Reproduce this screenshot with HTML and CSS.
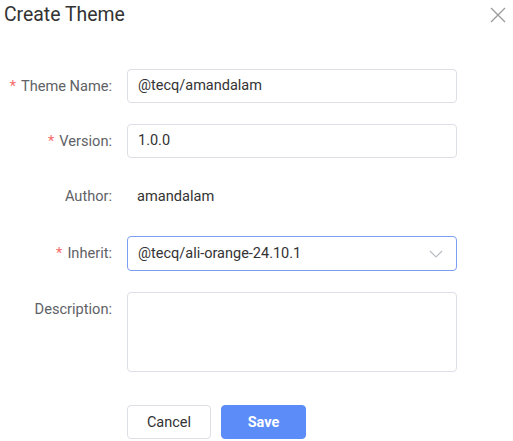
FILE: index.html
```html
<!DOCTYPE html>
<html>
<head>
<meta charset="utf-8">
<link rel="stylesheet" href="styles.css">
</head>
<body>
<div class="dialog">
  <div class="header">
    <span class="title">Create Theme</span>
    <svg class="close" width="16" height="16" viewBox="0 0 16 16"><path d="M1 1L15 15M15 1L1 15" stroke="#9a9a9a" stroke-width="1.3" fill="none"/></svg>
  </div>
  <form class="form">
    <div class="row">
      <label class="label"><span class="req">*</span>Theme Name:</label>
      <div class="control"><div class="input">@tecq/amandalam</div></div>
    </div>
    <div class="row">
      <label class="label"><span class="req">*</span>Version:</label>
      <div class="control"><div class="input">1.0.0</div></div>
    </div>
    <div class="row row-author">
      <label class="label">Author:</label>
      <div class="control"><div class="static">amandalam</div></div>
    </div>
    <div class="row">
      <label class="label"><span class="req">*</span>Inherit:</label>
      <div class="control"><div class="input select">@tecq/ali-orange-24.10.1
        <svg class="chev" width="14" height="8" viewBox="0 0 14 8"><path d="M1 1L7 7L13 1" stroke="#b8bcc4" stroke-width="1.2" fill="none"/></svg></div></div>
    </div>
    <div class="row">
      <label class="label">Description:</label>
      <div class="control"><div class="textarea"></div></div>
    </div>
    <div class="actions">
      <button type="button" class="btn btn-cancel">Cancel</button>
      <button type="button" class="btn btn-save">Save</button>
    </div>
  </form>
</div>
</body>
</html>
```

FILE: styles.css
```css
* { box-sizing: border-box; }
html, body { margin: 0; padding: 0; background: #fff; }
body { font-family: Roboto, "Liberation Sans", sans-serif; width: 513px; height: 441px; overflow: hidden; }
.dialog { width: 513px; }
.header { display: flex; justify-content: space-between; align-items: center; height: 30px; padding: 0 7px 0 4px; }
.title { font-size: 19.4px; color: #333; line-height: 30px; }
.close { margin-top: -1px; }
.form { padding-top: 39px; }
.row { display: flex; align-items: flex-start; margin-bottom: 21px; }
.row-author { height: 36px; }
.label { width: 112px; text-align: right; font-size: 14.6px; color: #606266; line-height: 34px; margin-right: 15px; white-space: nowrap; }
.req { color: #f56c6c; margin-right: 5px; }
.control { width: 330px; }
.input { height: 34px; border: 1px solid #dcdfe6; border-radius: 4px; padding: 0 10px; font-size: 14.5px; color: #333; line-height: 32px; }
.select { height: 35px; border-color: #7b9ff0; display: flex; justify-content: space-between; align-items: center; padding-right: 13px; }
.static { font-size: 14.6px; color: #333; line-height: 34px; padding-left: 10px; }
.textarea { height: 80px; border: 1px solid #dcdfe6; border-radius: 4px; }
.actions { display: flex; gap: 10px; padding-left: 127px; margin-top: 33px; }
.btn { height: 34px; border-radius: 4px; font-family: Roboto, "Liberation Sans", sans-serif; font-size: 14.5px; cursor: pointer; }
.btn-cancel { width: 84px; background: #fff; border: 1px solid #dcdfe6; color: #333; }
.btn-save { width: 85px; background: #5b8cf7; border: 1px solid #5b8cf7; color: #fff; font-weight: bold; }
```
